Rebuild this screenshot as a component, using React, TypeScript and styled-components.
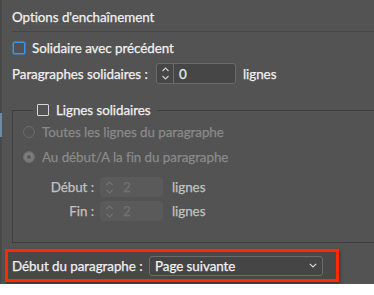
import React from "react";
import styled, { createGlobalStyle } from "styled-components";

const Global = createGlobalStyle`
  html, body { margin: 0; padding: 0; background: #ffffff; }
  body {
    font-family: Lato, "Liberation Sans", sans-serif;
    font-size: 13.4px;
    letter-spacing: -0.05px;
    -webkit-text-stroke: 0.25px currentColor;
  }
  * { box-sizing: border-box; }
`;

const Panel = styled.div`
  width: 374px;
  height: 284px;
  background: #535353;
  display: flex;
  overflow: hidden;
`;

const SideStrip = styled.div`
  width: 2px;
  flex: none;
  background: #484848;
  display: flex;
  flex-direction: column;
`;

const SideMark = styled.div<{ $top: number; $h: number }>`
  margin-top: ${(p) => p.$top}px;
  height: ${(p) => p.$h}px;
  background: #6d8aa6;
`;

const Main = styled.div`
  flex: 1;
  min-width: 0;
  padding-left: 10px;
  display: flex;
  flex-direction: column;
`;

const Title = styled.div`
  padding: 9px 0 6px 0;
  line-height: 16px;
  color: #f0f0f0;
  border-bottom: 1px solid #464646;
`;

const Row = styled.div<{ $mt: number; $h?: number }>`
  display: flex;
  align-items: center;
  margin-top: ${(p) => p.$mt}px;
  height: ${(p) => p.$h ?? 16}px;
  line-height: 16px;
  white-space: nowrap;
`;

const CheckBox = styled.span<{ $focus?: boolean }>`
  display: inline-block;
  flex: none;
  width: 12px;
  height: 12px;
  border-radius: 1px;
  border: 1px solid ${(p) => (p.$focus ? "#3b93f0" : "#d6d6d6")};
  box-shadow: ${(p) => (p.$focus ? "0 0 0 0.5px #3b93f0" : "none")};
  margin-right: 7px;
`;

const Text = styled.span<{ $dim?: "on" | "mid" | "off" }>`
  color: ${(p) =>
    p.$dim === "off" ? "#8a8a8a" : p.$dim === "mid" ? "#c2c2c2" : "#f0f0f0"};
`;

const Label = styled.span<{ $w: number; $right?: boolean; $dim?: boolean }>`
  width: ${(p) => p.$w}px;
  flex: none;
  text-align: ${(p) => (p.$right ? "right" : "left")};
  color: ${(p) => (p.$dim ? "#c2c2c2" : "#f0f0f0")};
`;

const Spinner = styled.div<{ $w: number; $h: number; $disabled?: boolean }>`
  width: ${(p) => p.$w}px;
  height: ${(p) => p.$h}px;
  flex: none;
  display: flex;
  align-items: stretch;
  border-radius: 3px;
  background: ${(p) => (p.$disabled ? "#5a5a5a" : "#464646")};
  border: 1px solid ${(p) => (p.$disabled ? "#5a5a5a" : "#6b6b6b")};
`;

const SpinArrows = styled.div<{ $disabled?: boolean }>`
  width: 17px;
  flex: none;
  display: flex;
  align-items: center;
  justify-content: center;
  border-right: 1px solid ${(p) => (p.$disabled ? "#5a5a5a" : "#6b6b6b")};
`;

const SpinValue = styled.div<{ $disabled?: boolean }>`
  flex: 1;
  padding-left: 5px;
  display: flex;
  align-items: center;
  color: ${(p) => (p.$disabled ? "#727272" : "#ececec")};
`;

const Unit = styled.span<{ $ml: number; $dim?: boolean }>`
  margin-left: ${(p) => p.$ml}px;
  color: ${(p) => (p.$dim ? "#c2c2c2" : "#f0f0f0")};
`;

const Group = styled.fieldset`
  margin: 18px -20px 0 0;
  padding: 0 0 21px 10px;
  border: 1px solid #3e3e3e;
  min-width: 0;
`;

const Legend = styled.legend`
  margin-left: 10px;
  padding: 0 6px 0 4px;
  display: flex;
  align-items: center;
  line-height: 16px;
  color: #f0f0f0;
`;

const Radio = styled.span<{ $on?: boolean }>`
  flex: none;
  width: 12px;
  height: 12px;
  border-radius: 50%;
  border: 1px solid #6c6c6c;
  background: ${(p) => (p.$on ? "#7b7b7b" : "transparent")};
  margin-right: 7px;
  display: flex;
  align-items: center;
  justify-content: center;
  &::after {
    content: "";
    display: ${(p) => (p.$on ? "block" : "none")};
    width: 4px;
    height: 4px;
    border-radius: 50%;
    background: #5a5a5a;
  }
`;

const Highlight = styled.div`
  margin: 6px 0 0 -7px;
  width: 334px;
  height: 33px;
  border: 3px solid #ff2a00;
  background: #484848;
  box-shadow: 1px 2px 3px rgba(0, 0, 0, 0.35);
  padding-left: 4px;
  display: flex;
  align-items: center;
  white-space: nowrap;
`;

const Select = styled.div`
  width: 174px;
  height: 20px;
  flex: none;
  border: 1px solid #6b6b6b;
  border-radius: 3px;
  background: #454545;
  padding: 0 5px 0 5px;
  display: flex;
  align-items: center;
  justify-content: space-between;
  color: #f2f2f2;
`;

const SpinIcon = ({ color }: { color: string }) => (
  <svg width="9" height="15" viewBox="0 0 9 15" fill="none">
    <path d="M1.5 5 L4.5 2 L7.5 5" stroke={color} strokeWidth="1.1" />
    <path d="M1.5 10 L4.5 13 L7.5 10" stroke={color} strokeWidth="1.1" />
  </svg>
);

const Chevron = () => (
  <svg width="8" height="5" viewBox="0 0 8 5" fill="none">
    <path d="M0.8 0.8 L4 4 L7.2 0.8" stroke="#d8d8d8" strokeWidth="1.2" />
  </svg>
);

export default function App() {
  return (
    <>
      <Global />
      <Panel>
        <SideStrip>
          <SideMark $top={113} $h={24} />
        </SideStrip>
        <Main>
          <Title>Options d'enchaînement</Title>
          <Row $mt={8}>
            <CheckBox $focus style={{ marginLeft: 1 }} />
            <Text>Solidaire avec précédent</Text>
          </Row>
          <Row $mt={7} $h={21}>
            <Label $w={144}>Paragraphes solidaires :</Label>
            <Spinner $w={80} $h={21}>
              <SpinArrows>
                <SpinIcon color="#d0d0d0" />
              </SpinArrows>
              <SpinValue>0</SpinValue>
            </Spinner>
            <Unit $ml={7}>lignes</Unit>
          </Row>
          <Group>
            <Legend>
              <CheckBox />
              <span>Lignes solidaires</span>
            </Legend>
            <Row $mt={6}>
              <Radio />
              <Text $dim="off">Toutes les lignes du paragraphe</Text>
            </Row>
            <Row $mt={9}>
              <Radio $on />
              <Text $dim="off">Au début/A la fin du paragraphe</Text>
            </Row>
            <Row $mt={12} $h={20}>
              <Label $w={71} $right $dim>
                Début :
              </Label>
              <Spinner $w={63} $h={20} $disabled style={{ marginLeft: 6 }}>
                <SpinArrows $disabled>
                  <SpinIcon color="#727272" />
                </SpinArrows>
                <SpinValue $disabled>2</SpinValue>
              </Spinner>
              <Unit $ml={9} $dim>
                lignes
              </Unit>
            </Row>
            <Row $mt={4} $h={20}>
              <Label $w={71} $right $dim>
                Fin :
              </Label>
              <Spinner $w={63} $h={20} $disabled style={{ marginLeft: 6 }}>
                <SpinArrows $disabled>
                  <SpinIcon color="#727272" />
                </SpinArrows>
                <SpinValue $disabled>2</SpinValue>
              </Spinner>
              <Unit $ml={9} $dim>
                lignes
              </Unit>
            </Row>
          </Group>
          <Highlight>
            <Label $w={137}>Début du paragraphe :</Label>
            <Select>
              <span>Page suivante</span>
              <Chevron />
            </Select>
          </Highlight>
        </Main>
      </Panel>
    </>
  );
}
